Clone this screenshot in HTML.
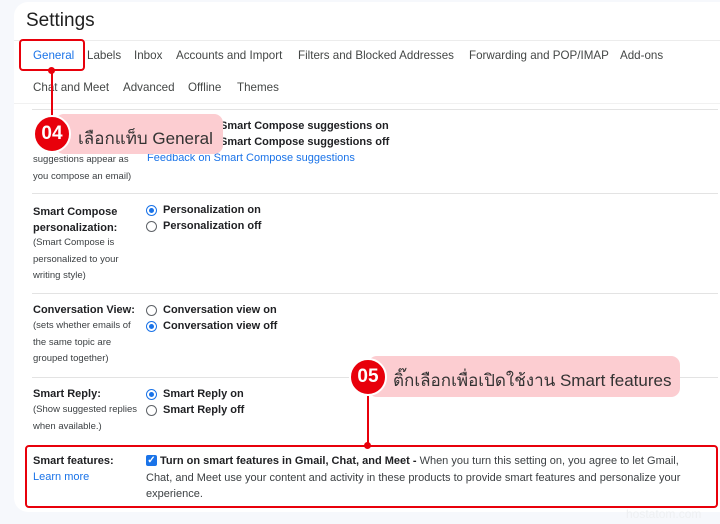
<!DOCTYPE html>
<html><head><meta charset="utf-8"><style>
*{margin:0;padding:0;box-sizing:border-box}
body{width:720px;height:524px;background:#f6f8fc;font-family:"Liberation Sans",Arial,sans-serif;position:relative;overflow:hidden;color:#202124}
.card{position:absolute;left:14px;top:2px;width:740px;height:510px;background:#fff;border-radius:14px}
.a{position:absolute;white-space:nowrap}
.tab{font-size:11.6px;color:#444746}
.hr{position:absolute;height:1px;background:#e3e3e3}
.lb{font-size:11px;font-weight:bold;color:#202124}
.sm{font-size:9.5px;color:#3c4043;line-height:16.5px}
.op{font-size:11px;font-weight:bold;color:#202124}
.r{position:absolute;width:11px;height:11px;border:1px solid #5f6368;border-radius:50%}
.r.on{border-color:#1a73e8}
.r.on:after{content:"";position:absolute;left:2px;top:2px;width:5px;height:5px;border-radius:50%;background:#1a73e8}
.lnk{color:#1a73e8}
.pink{position:absolute;background:#fccdd1;border-radius:9px}
.badge{position:absolute;background:#e8000b;border:2px solid #fff;border-radius:50%;color:#fff;font-size:19px;font-weight:bold;text-align:center}
.th{font-family:"Liberation Sans","Noto Sans CJK SC",sans-serif}
</style></head><body>
<div class="card"></div>
<div class="a" style="left:26px;top:10px;font-size:19px;color:#1f1f1f">Settings</div>
<div class="hr" style="left:14px;top:40px;width:706px;background:#ececec"></div>
<div class="a tab" style="left:33px;top:49px;color:#1a73e8">General</div>
<div class="a tab" style="left:87px;top:49px">Labels</div>
<div class="a tab" style="left:134px;top:49px">Inbox</div>
<div class="a tab" style="left:176px;top:49px">Accounts and Import</div>
<div class="a tab" style="left:298px;top:49px">Filters and Blocked Addresses</div>
<div class="a tab" style="left:469px;top:49px">Forwarding and POP/IMAP</div>
<div class="a tab" style="left:620px;top:49px">Add-ons</div>
<div class="a tab" style="left:33px;top:81px">Chat and Meet</div>
<div class="a tab" style="left:123px;top:81px">Advanced</div>
<div class="a tab" style="left:188px;top:81px">Offline</div>
<div class="a tab" style="left:237px;top:81px">Themes</div>
<div class="hr" style="left:14px;top:103px;width:706px;background:#f1f1f1"></div>
<div class="hr" style="left:32px;top:109px;width:686px"></div>

<div class="a op" style="left:220px;top:120px">Smart Compose suggestions on</div>
<div class="a op" style="left:220px;top:136px">Smart Compose suggestions off</div>
<div class="a" style="left:147px;top:152px;font-size:11px" ><span class="lnk">Feedback on Smart Compose suggestions</span></div>
<div class="a sm" style="left:33px;top:152px">suggestions appear as<br>you compose an email)</div>
<div class="hr" style="left:32px;top:193px;width:686px"></div>

<div class="a lb" style="left:33px;top:204px;line-height:16px">Smart Compose<br>personalization:</div>
<div class="a sm" style="left:33px;top:235px">(Smart Compose is<br>personalized to your<br>writing style)</div>
<div class="r on" style="left:146px;top:205px"></div><div class="a op" style="left:163px;top:204px">Personalization on</div>
<div class="r" style="left:146px;top:221px"></div><div class="a op" style="left:163px;top:220px">Personalization off</div>
<div class="hr" style="left:32px;top:293px;width:686px"></div>

<div class="a lb" style="left:33px;top:304px">Conversation View:</div>
<div class="a sm" style="left:33px;top:318px">(sets whether emails of<br>the same topic are<br>grouped together)</div>
<div class="r" style="left:146px;top:305px"></div><div class="a op" style="left:163px;top:304px">Conversation view on</div>
<div class="r on" style="left:146px;top:321px"></div><div class="a op" style="left:163px;top:320px">Conversation view off</div>
<div class="hr" style="left:32px;top:377px;width:686px"></div>

<div class="a lb" style="left:33px;top:388px">Smart Reply:</div>
<div class="a sm" style="left:33px;top:402px">(Show suggested replies<br>when available.)</div>
<div class="r on" style="left:146px;top:389px"></div><div class="a op" style="left:163px;top:388px">Smart Reply on</div>
<div class="r" style="left:146px;top:405px"></div><div class="a op" style="left:163px;top:404px">Smart Reply off</div>

<div class="a lb" style="left:33px;top:455px">Smart features:</div>
<div class="a" style="left:33px;top:471px;font-size:11px"><span class="lnk">Learn more</span></div>
<div class="a" style="left:146px;top:455px;width:11px;height:11px;background:#1a73e8;border-radius:2px;color:#fff;font-size:10px;line-height:11px;text-align:center;font-weight:bold">✓</div>
<div class="a" style="left:146px;top:453px;width:560px;white-space:normal;font-size:11px;line-height:16.5px;color:#3c4043;text-indent:14px"><b style="color:#202124">Turn on smart features in Gmail, Chat, and Meet - </b>When you turn this setting on, you agree to let Gmail, Chat, and Meet use your content and activity in these products to provide smart features and personalize your experience.</div>
<div class="a" style="left:626px;top:507px;font-size:12px;color:#eef0f2">hostatom.com</div>

<!-- annotations -->
<div class="a" style="left:19px;top:39px;width:66px;height:32px;border:2px solid #e8000b;border-radius:4px"></div>
<div class="a" style="left:51px;top:70px;width:2px;height:50px;background:#e8000b"></div>
<div class="a" style="left:48px;top:67px;width:7px;height:7px;border-radius:50%;background:#e8000b"></div>
<div class="pink" style="left:55px;top:114px;width:168px;height:40px"></div>
<div class="badge" style="left:33px;top:115px;width:38px;height:38px;line-height:34px">04</div>
<div class="a th" style="left:78px;top:125px;font-size:17px;color:#333">เลือกแท็บ General</div>

<div class="pink" style="left:368px;top:356px;width:312px;height:41px"></div>
<div class="badge" style="left:349px;top:358px;width:38px;height:38px;line-height:34px">05</div>
<div class="a th" style="left:393px;top:367px;font-size:17px;color:#333">ติ๊กเลือกเพื่อเปิดใช้งาน Smart features</div>
<div class="a" style="left:367px;top:396px;width:2px;height:50px;background:#e8000b"></div>
<div class="a" style="left:364px;top:442px;width:7px;height:7px;border-radius:50%;background:#e8000b"></div>
<div class="a" style="left:25px;top:445px;width:693px;height:63px;border:2px solid #e8000b;border-radius:4px"></div>
</body></html>
